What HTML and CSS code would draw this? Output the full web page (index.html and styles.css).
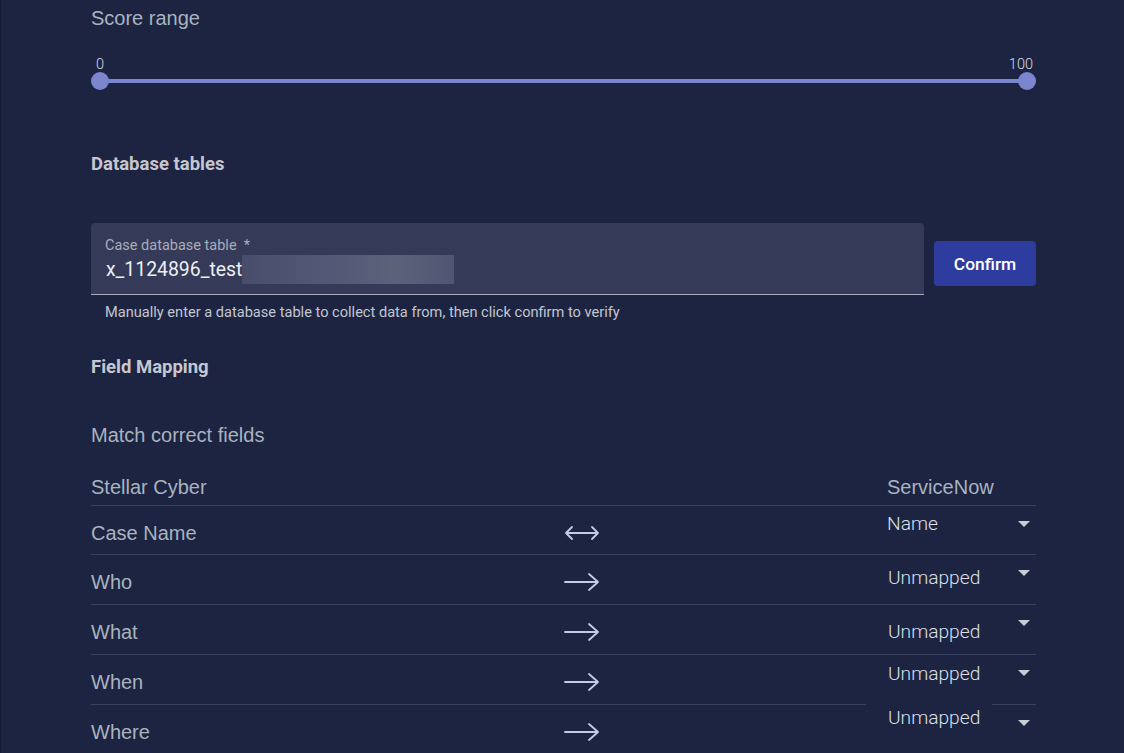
FILE: index.html
```html
<!DOCTYPE html>
<html>
<head>
<meta charset="utf-8">
<link rel="stylesheet" href="styles.css">
</head>
<body>
<div class="page">
  <div class="content">
    <div class="h-range">Score range</div>
    <div class="slider">
      <div class="slider-labels"><span class="lab-min">0</span><span class="lab-max">100</span></div>
      <div class="track"><span class="thumb thumb-l"></span><span class="thumb thumb-r"></span></div>
    </div>

    <div class="h-bold h-db">Database tables</div>
    <div class="input-row">
      <div class="field">
        <div class="field-label">Case database table&nbsp; *</div>
        <div class="field-value"><span>x_1124896_test</span><span class="blur"></span></div>
      </div>
      <button class="btn">Confirm</button>
    </div>
    <div class="helper">Manually enter a database table to collect data from, then click confirm to verify</div>

    <div class="h-bold h-fm">Field Mapping</div>
    <div class="h-match">Match correct fields</div>

    <div class="map">
      <div class="map-head">
        <div class="col-a">Stellar Cyber</div>
        <div></div>
        <div></div>
        <div class="col-d">ServiceNow</div>
      </div>

      <div class="map-row">
        <div class="col-a">Case Name</div>
        <div class="arrow"><svg width="36" height="16" viewBox="0 0 36 16"><path d="M2 8H34M8 2L2 8L8 14M28 2L34 8L28 14" fill="none" stroke="#c5cbe6" stroke-width="1.8" stroke-linecap="round" stroke-linejoin="round"/></svg></div>
        <div></div>
        <div class="sel"><span class="sel-text t18">Name</span><span class="caret"></span></div>
      </div>

      <div class="map-row">
        <div class="col-a">Who</div>
        <div class="arrow"><svg width="36" height="20" viewBox="0 0 36 20"><path d="M1 10H34M25 2L34 10L25 18" fill="none" stroke="#c5cbe6" stroke-width="1.8" stroke-linecap="round" stroke-linejoin="round"/></svg></div>
        <div></div>
        <div class="sel"><span class="sel-text t23">Unmapped</span><span class="caret"></span></div>
      </div>

      <div class="map-row">
        <div class="col-a">What</div>
        <div class="arrow"><svg width="36" height="20" viewBox="0 0 36 20"><path d="M1 10H34M25 2L34 10L25 18" fill="none" stroke="#c5cbe6" stroke-width="1.8" stroke-linecap="round" stroke-linejoin="round"/></svg></div>
        <div></div>
        <div class="sel"><span class="sel-text t27">Unmapped</span><span class="caret"></span></div>
      </div>

      <div class="map-row row-gap">
        <div class="col-a">When</div>
        <div class="arrow"><svg width="36" height="20" viewBox="0 0 36 20"><path d="M1 10H34M25 2L34 10L25 18" fill="none" stroke="#c5cbe6" stroke-width="1.8" stroke-linecap="round" stroke-linejoin="round"/></svg></div>
        <div></div>
        <div class="sel"><span class="sel-text t19">Unmapped</span><span class="caret"></span></div>
      </div>

      <div class="map-row last">
        <div class="col-a">Where</div>
        <div class="arrow"><svg width="36" height="20" viewBox="0 0 36 20"><path d="M1 10H34M25 2L34 10L25 18" fill="none" stroke="#c5cbe6" stroke-width="1.8" stroke-linecap="round" stroke-linejoin="round"/></svg></div>
        <div></div>
        <div class="sel"><span class="sel-text t13">Unmapped</span><span class="caret c22"></span></div>
      </div>
    </div>
  </div>
</div>
</body>
</html>
```

FILE: styles.css
```css
html, body {
  margin: 0;
  padding: 0;
  background: #1c2442;
  height: 100%;
  overflow: hidden;
}
.page {
  border-left: 1px solid #141a31;
  height: 100%;
  font-family: "Liberation Sans", Arial, sans-serif;
}
.content {
  margin-left: 90px;
  width: 945px;
}
.h-range {
  padding-top: 6px;
  font-size: 20px;
  line-height: 24px;
  color: #a9b3bf;
}
.slider {
  padding-top: 27px;
}
.slider-labels {
  display: flex;
  justify-content: space-between;
  font-family: Roboto, sans-serif;
  font-weight: 300;
  font-size: 14.5px;
  line-height: 16px;
  color: #d6d9e2;
}
.lab-min { padding-left: 5px; }
.lab-max { padding-right: 3px; }
.track {
  position: relative;
  margin: 6px 9px 0 9px;
  height: 4px;
  background: #7b86cf;
  border-radius: 2px;
}
.thumb {
  position: absolute;
  top: -7px;
  width: 18px;
  height: 18px;
  border-radius: 50%;
  background: #7b86cf;
}
.thumb-l { left: -9px; }
.thumb-r { right: -9px; }

.h-bold {
  font-family: Roboto, sans-serif;
  font-weight: 700;
  font-size: 18.5px;
  line-height: 20px;
  color: #c6c7cf;
}
.h-db { margin-top: 71px; }
.input-row {
  margin-top: 49px;
  display: flex;
  align-items: flex-start;
  gap: 10px;
}
.field {
  flex: 1;
  background: #343a57;
  border-radius: 4px 4px 0 0;
  border-bottom: 1px solid #a6a9bb;
  padding: 15px 14px 0 14px;
  font-family: Roboto, sans-serif;
  height: 56px;
}
.field-label {
  font-size: 14.5px;
  line-height: 16px;
  color: #a9adba;
}
.field-value {
  margin-top: 1px;
  display: flex;
  align-items: center;
  font-size: 19.4px;
  line-height: 24px;
  color: #eceef3;
  padding-left: 1px;
}
.blur {
  display: inline-block;
  width: 212px;
  height: 29px;
  background: linear-gradient(90deg, #474d6b 0%, #4e5472 25%, #585d78 60%, #5d627b 72%, #4f5572 100%);
}
.btn {
  margin-top: 18px;
  width: 102px;
  height: 45px;
  border: none;
  border-radius: 4px;
  background: #2f3c9f;
  color: #ffffff;
  font-family: Roboto, sans-serif;
  font-weight: 500;
  font-size: 17.4px;
  padding: 0;
}
.helper {
  margin-top: 9px;
  padding-left: 14px;
  font-family: Roboto, sans-serif;
  font-size: 14.6px;
  line-height: 16px;
  color: #c3c6cf;
}
.h-fm { margin-top: 37px; }
.h-match {
  margin-top: 46px;
  font-size: 20px;
  line-height: 24px;
  color: #a9b3bf;
}
.map {
  margin-top: 28px;
  font-size: 20px;
  color: #a9b3bf;
}
.map-head, .map-row {
  display: grid;
  grid-template-columns: 473px 36px 266px 170px;
}
.map-head {
  line-height: 24px;
  padding-bottom: 6px;
  border-bottom: 1px solid #394160;
}
.col-d { padding-left: 21px; }
.map-row {
  height: 48px;
  background: linear-gradient(#394160, #394160) bottom / 100% 1px no-repeat;
  padding-bottom: 1px;
}
.map-row + .map-row { height: 49px; }
.map-row.row-gap {
  background:
    linear-gradient(#394160, #394160) left bottom / 775px 1px no-repeat,
    linear-gradient(#394160, #394160) right bottom / 44px 1px no-repeat;
}
.map-row.last { background: none; }
.map-row .col-a {
  align-self: center;
  padding-top: 5px;
  line-height: 24px;
}
.arrow {
  align-self: center;
  padding-top: 5px;
  display: flex;
  justify-content: center;
}
.arrow svg { display: block; }
.sel {
  display: flex;
  align-items: flex-start;
  justify-content: space-between;
  padding: 0 6px 0 21px;
  font-family: Roboto, sans-serif;
  font-weight: 300;
  font-size: 19.2px;
  line-height: 22px;
  color: #dde0ea;
}
.t18 { margin-top: 7px; }
.t23 { margin-top: 12px; padding-left: 1px; }
.t27 { margin-top: 16px; padding-left: 1px; }
.t19 { margin-top: 8px; padding-left: 1px; }
.t13 { margin-top: 2px; padding-left: 1px; }
.caret {
  width: 0;
  height: 0;
  margin-top: 15px;
  border-left: 6px solid transparent;
  border-right: 6px solid transparent;
  border-top: 6px solid #c9ccd7;
}
.c22 { margin-top: 15px; }
```
